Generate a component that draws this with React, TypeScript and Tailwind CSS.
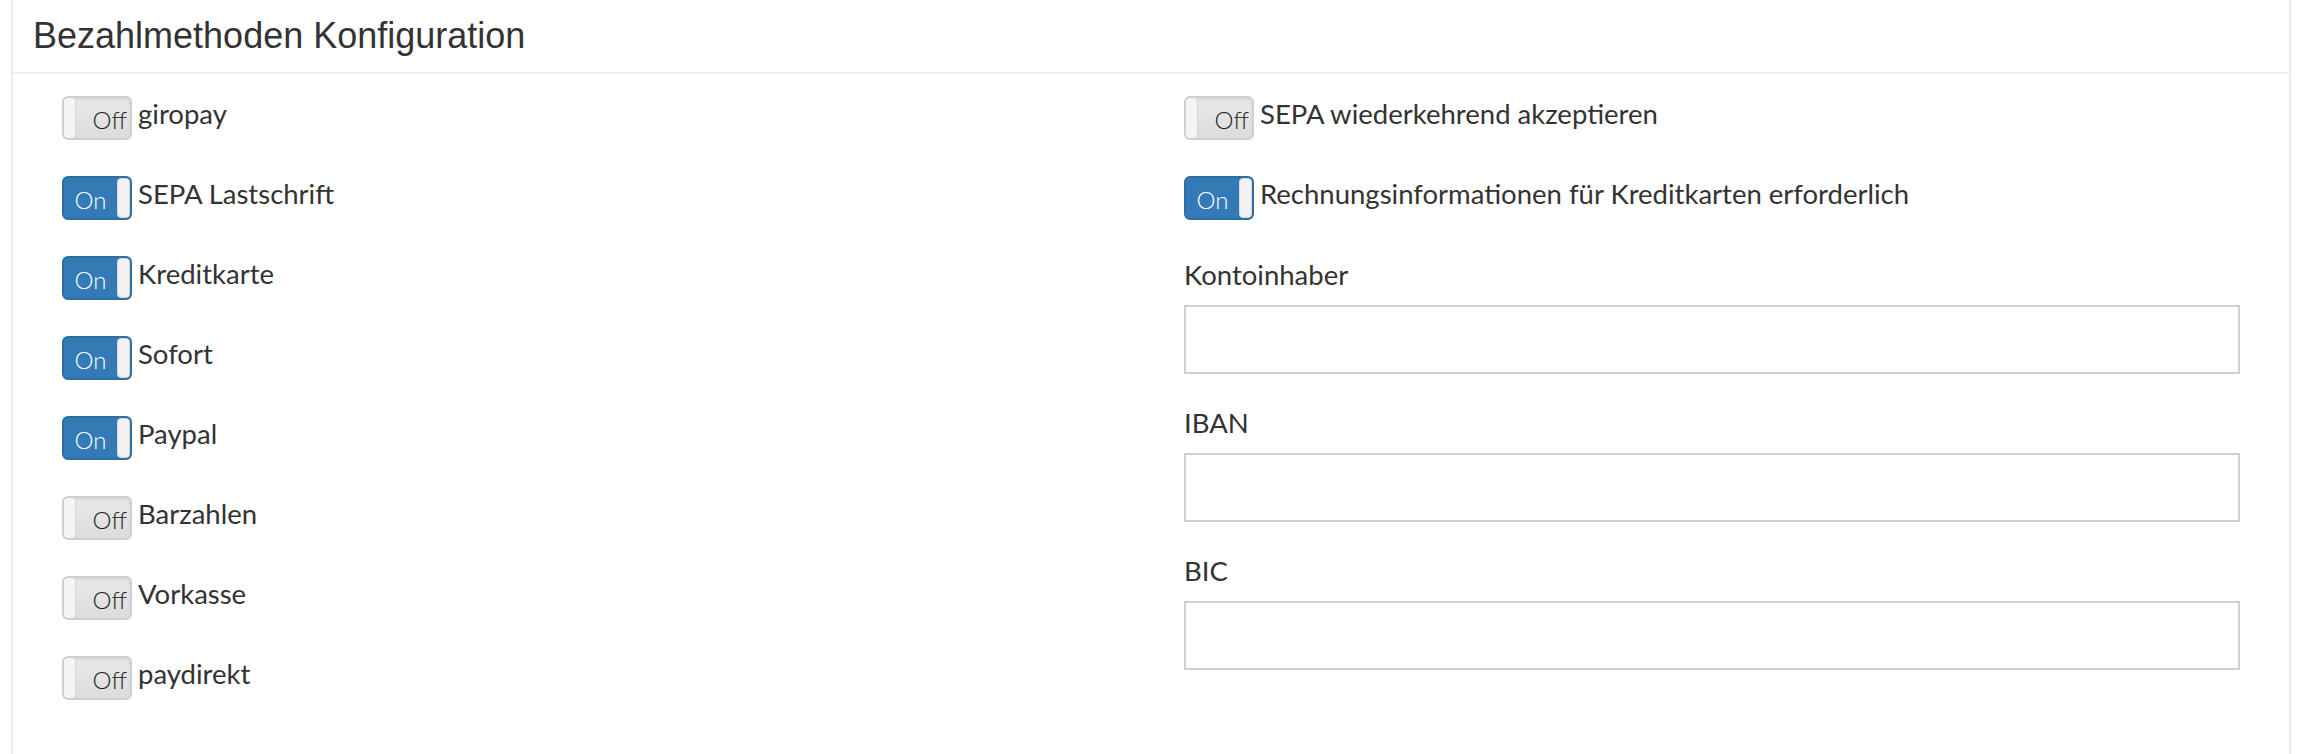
import React from "react"

type Item = { label: string; on: boolean }

const leftItems: Item[] = [
  { label: "giropay", on: false },
  { label: "SEPA Lastschrift", on: true },
  { label: "Kreditkarte", on: true },
  { label: "Sofort", on: true },
  { label: "Paypal", on: true },
  { label: "Barzahlen", on: false },
  { label: "Vorkasse", on: false },
  { label: "paydirekt", on: false },
]

const rightItems: Item[] = [
  { label: "SEPA wiederkehrend akzeptieren", on: false },
  { label: "Rechnungsinformationen für Kreditkarten erforderlich", on: true },
]

const fields = ["Kontoinhaber", "IBAN", "BIC"]

function Toggle({ on }: { on: boolean }) {
  if (on) {
    return (
      <div className="flex h-[44px] w-[70px] shrink-0 overflow-hidden rounded-[6px] border-2 border-[#2e6da4] bg-[#337ab7]">
        <div className="flex flex-1 items-center justify-center pt-[3px] text-[24px] font-light text-white">On</div>
        <div className="h-full w-[13px] rounded-[4px] border border-[#d9d9d9] bg-[#f2f2f2]" />
      </div>
    )
  }
  return (
    <div className="flex h-[44px] w-[70px] shrink-0 overflow-hidden rounded-[6px] border-2 border-[#cfcfcf] bg-gradient-to-b from-[#e9e9e9] to-[#dcdcdc] shadow-[inset_0_2px_3px_rgba(0,0,0,0.08)]">
      <div className="h-full w-[12px] rounded-[4px] border-r border-[#d4d4d4] bg-[#f4f4f4]" />
      <div className="flex flex-1 items-center justify-end pr-[3px] pt-[3px] text-[24px] font-light text-[#222]">Off</div>
    </div>
  )
}

function ToggleRow({ item }: { item: Item }) {
  return (
    <div className="flex h-[80px] items-start">
      <Toggle on={item.on} />
      <span className="ml-[6px] -mt-[2px] text-[27.5px] leading-[40px] text-[#333]">{item.label}</span>
    </div>
  )
}

export default function App() {
  return (
    <div
      className="min-h-[754px] w-[2304px] bg-white pl-[11px] pr-[13px]"
      style={{ fontFamily: "Lato, 'Open Sans', sans-serif" }}
    >
      <div className="min-h-[754px] border-x-2 border-[#ececec]">
        <div className="flex h-[74px] items-center border-b-2 border-[#efefef] pl-[20px]">
          <h3
            className="text-[36px] text-[#333]"
            style={{ fontFamily: "'Liberation Sans', Arial, sans-serif" }}
          >
            Bezahlmethoden Konfiguration
          </h3>
        </div>

        <div className="grid grid-cols-2 gap-x-[66px] px-[49px] pt-[22px]">
          <div className="flex flex-col">
            {leftItems.map((it) => (
              <ToggleRow key={it.label} item={it} />
            ))}
          </div>

          <div className="flex flex-col">
            {rightItems.map((it) => (
              <ToggleRow key={it.label} item={it} />
            ))}
            <div className="-mt-[1px] flex flex-col">
              {fields.map((f) => (
                <div key={f} className="flex flex-col">
                  <label className="text-[27.5px] leading-[40px] text-[#333]">{f}</label>
                  <input
                    type="text"
                    className="mt-[10px] mb-[29px] h-[69px] w-full border-2 border-[#ccd0da] bg-white px-3 outline-none"
                  />
                </div>
              ))}
            </div>
          </div>
        </div>
      </div>
    </div>
  )
}
